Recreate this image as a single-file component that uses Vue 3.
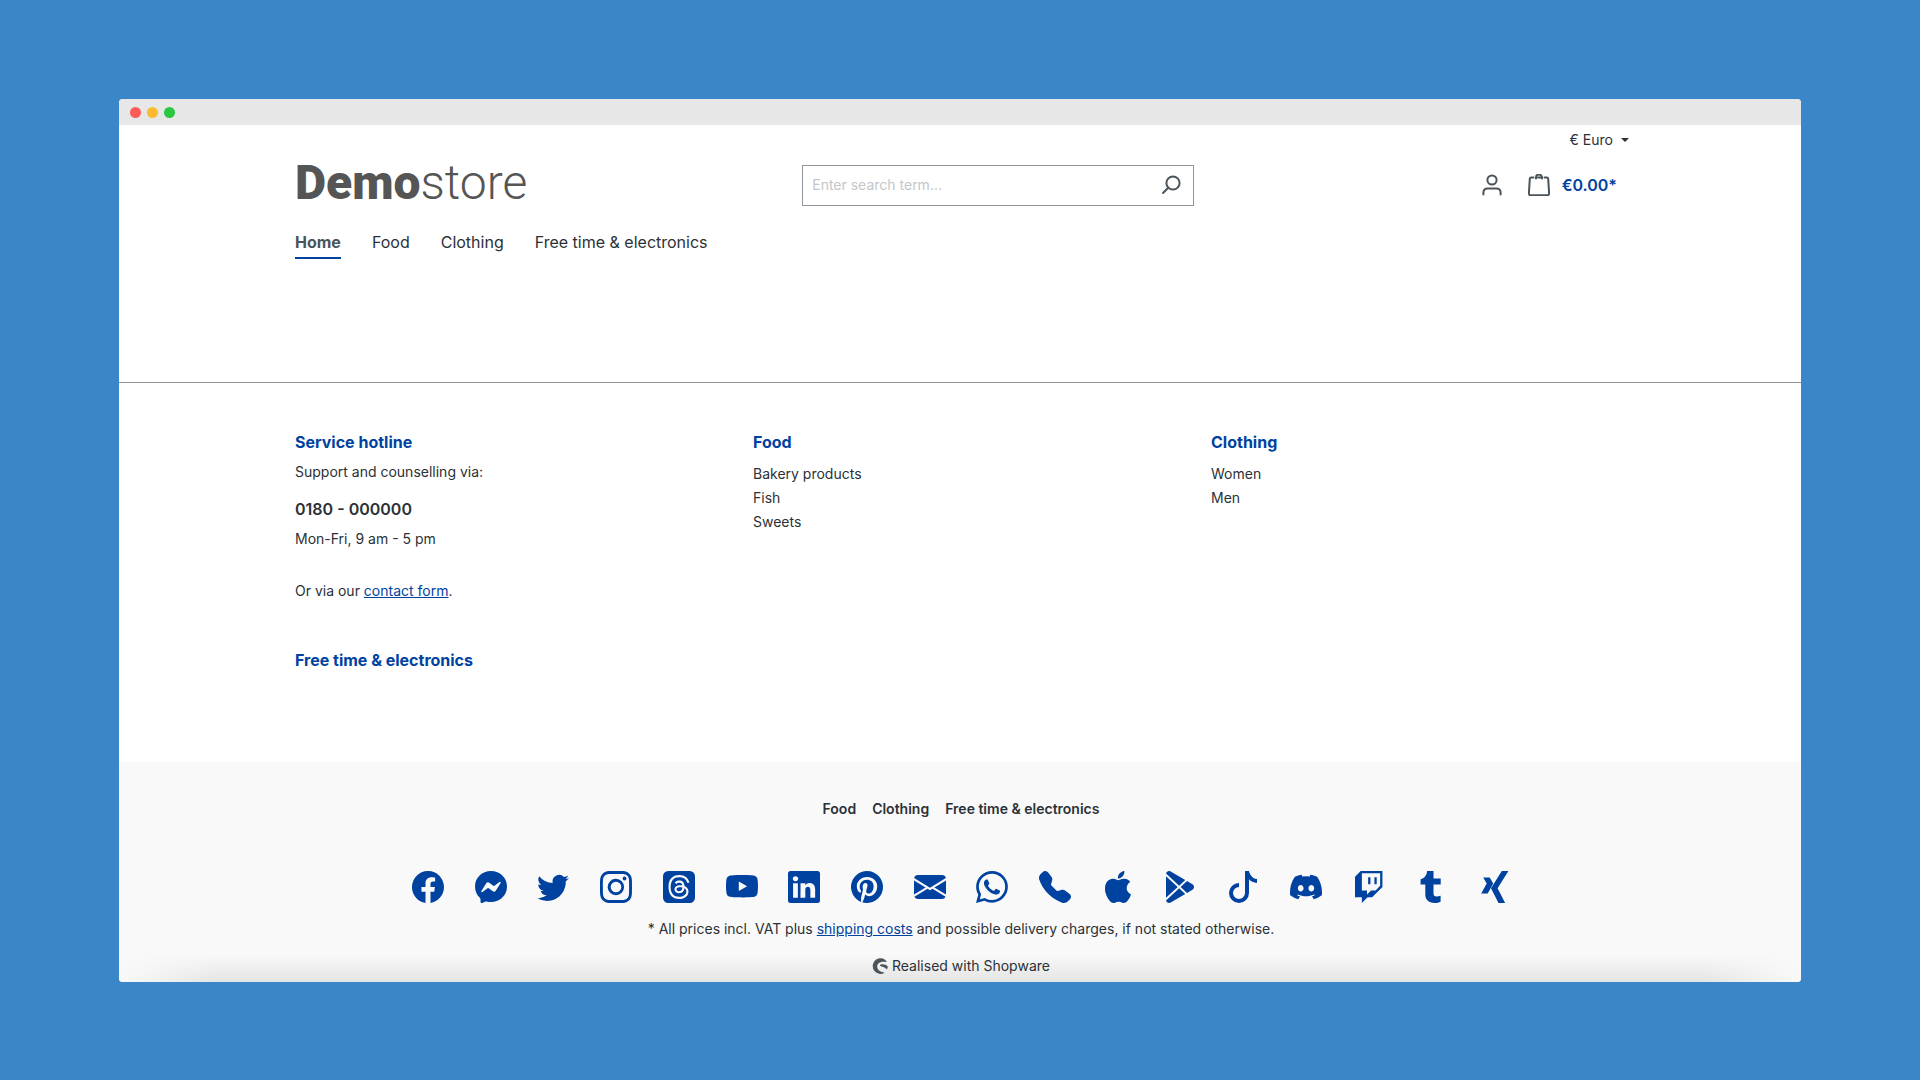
<script setup>
const mainNav = ['Home', 'Food', 'Clothing', 'Free time & electronics']
const footerNav = ['Food', 'Clothing', 'Free time & electronics']

const columns = [
  { title: 'Food', links: ['Bakery products', 'Fish', 'Sweets'] },
  { title: 'Clothing', links: ['Women', 'Men'] },
  { title: 'Free time & electronics', links: [] },
]

const socials = [
  { name: 'Facebook', paths: ['M16 8.049c0-4.446-3.582-8.05-8-8.05C3.58 0-.002 3.603-.002 8.05c0 4.017 2.926 7.347 6.75 7.951v-5.625h-2.03V8.05H6.75V6.275c0-2.017 1.195-3.131 3.022-3.131.876 0 1.791.157 1.791.157v1.98h-1.009c-.993 0-1.303.621-1.303 1.258v1.51h2.218l-.354 2.326H9.25V16c3.824-.604 6.75-3.934 6.75-7.951'] },
  { name: 'Messenger', paths: ['M0 7.76C0 3.301 3.493 0 8 0s8 3.301 8 7.76-3.493 7.76-8 7.76c-.81 0-1.586-.107-2.316-.307a.64.64 0 0 0-.427.03l-1.588.702a.64.64 0 0 1-.898-.566l-.044-1.423a.64.64 0 0 0-.215-.456C.956 12.108 0 10.092 0 7.76m5.546-1.459-2.35 3.728c-.225.358.214.761.551.506l2.525-1.916a.48.48 0 0 1 .578-.002l1.869 1.402a1.2 1.2 0 0 0 1.735-.32l2.35-3.728c.226-.358-.214-.761-.551-.506L9.728 7.381a.48.48 0 0 1-.578.002L7.281 5.98a1.2 1.2 0 0 0-1.735.32z'] },
  { name: 'Twitter', paths: ['M5.026 15c6.038 0 9.341-5.003 9.341-9.334q.002-.211-.006-.422A6.7 6.7 0 0 0 16 3.542a6.7 6.7 0 0 1-1.889.518 3.3 3.3 0 0 0 1.447-1.817 6.5 6.5 0 0 1-2.087.793A3.286 3.286 0 0 0 7.875 6.03a9.32 9.32 0 0 1-6.767-3.429 3.29 3.29 0 0 0 1.018 4.382A3.3 3.3 0 0 1 .64 6.575v.045a3.29 3.29 0 0 0 2.632 3.218 3.2 3.2 0 0 1-.865.115 3 3 0 0 1-.614-.057 3.28 3.28 0 0 0 3.067 2.277A6.6 6.6 0 0 1 .78 13.58a6 6 0 0 1-.78-.045A9.34 9.34 0 0 0 5.026 15'] },
  { name: 'Instagram', paths: ['M8 0C5.829 0 5.556.01 4.703.048 3.85.088 3.269.222 2.76.42a3.9 3.9 0 0 0-1.417.923A3.9 3.9 0 0 0 .42 2.76C.222 3.268.087 3.85.048 4.7.01 5.555 0 5.827 0 8.001c0 2.172.01 2.444.048 3.297.04.852.174 1.433.372 1.942.205.526.478.972.923 1.417.444.445.89.719 1.416.923.51.198 1.09.333 1.942.372C5.555 15.99 5.827 16 8 16s2.444-.01 3.298-.048c.851-.04 1.434-.174 1.943-.372a3.9 3.9 0 0 0 1.416-.923c.445-.445.718-.891.923-1.417.197-.509.332-1.09.372-1.942C15.99 10.445 16 10.173 16 8s-.01-2.445-.048-3.299c-.04-.851-.175-1.433-.372-1.941a3.9 3.9 0 0 0-.923-1.417A3.9 3.9 0 0 0 13.24.42c-.51-.198-1.092-.333-1.943-.372C10.443.01 10.172 0 7.998 0zm-.717 1.442h.718c2.136 0 2.389.007 3.232.046.78.035 1.204.166 1.486.275.373.145.64.319.92.599s.453.546.598.92c.11.281.24.705.275 1.485.039.843.047 1.096.047 3.231s-.008 2.389-.047 3.232c-.035.78-.166 1.203-.275 1.485a2.5 2.5 0 0 1-.599.919c-.28.28-.546.453-.92.598-.28.11-.704.24-1.485.276-.843.038-1.096.047-3.232.047s-2.39-.009-3.233-.047c-.78-.036-1.203-.166-1.485-.276a2.5 2.5 0 0 1-.92-.598 2.5 2.5 0 0 1-.6-.92c-.109-.281-.24-.705-.275-1.485-.038-.843-.046-1.096-.046-3.233s.008-2.388.046-3.231c.036-.78.166-1.204.276-1.486.145-.373.319-.64.599-.92s.546-.453.92-.598c.282-.11.705-.24 1.485-.276.738-.034 1.024-.044 2.515-.045zm4.988 1.328a.96.96 0 1 0 0 1.92.96.96 0 0 0 0-1.92m-4.27 1.122a4.109 4.109 0 1 0 0 8.217 4.109 4.109 0 0 0 0-8.217m0 1.441a2.667 2.667 0 1 1 0 5.334 2.667 2.667 0 0 1 0-5.334'] },
  { name: 'Threads', paths: ['M6.81 9.204c0-.41.197-1.062 1.727-1.062.469 0 .758.034 1.146.121-.124 1.606-.91 1.818-1.674 1.818-.418 0-1.2-.218-1.2-.877Z', 'M2.59 16h10.82A2.59 2.59 0 0 0 16 13.41V2.59A2.59 2.59 0 0 0 13.41 0H2.59A2.59 2.59 0 0 0 0 2.59v10.82A2.59 2.59 0 0 0 2.59 16M5.866 5.91c.567-.81 1.315-1.126 2.35-1.126.73 0 1.351.246 1.795.711.443.466.696 1.132.754 1.983q.368.154.678.363c.832.559 1.29 1.395 1.29 2.353 0 2.037-1.67 3.806-4.692 3.806-2.595 0-5.291-1.51-5.291-6.004C2.75 3.526 5.361 2 8.033 2c1.234 0 4.129.182 5.217 3.777l-1.02.264c-.842-2.56-2.607-2.968-4.224-2.968-2.675 0-4.187 1.628-4.187 5.093 0 3.107 1.69 4.757 4.222 4.757 2.083 0 3.636-1.082 3.636-2.667 0-1.079-.906-1.595-.953-1.595-.177.925-.651 2.482-2.733 2.482-1.213 0-2.26-.838-2.26-1.936 0-1.568 1.488-2.136 2.663-2.136.44 0 .97.03 1.247.086 0-.478-.404-1.296-1.426-1.296-.911 0-1.16.288-1.45.624l-.024.027c-.202-.135-.875-.601-.875-.601Z'] },
  { name: 'YouTube', paths: ['M8.051 1.999h.089c.822.003 4.987.033 6.11.335a2.01 2.01 0 0 1 1.415 1.42c.101.38.172.883.22 1.402l.01.104.022.26.008.104c.065.914.073 1.77.074 1.957v.075c-.001.194-.01 1.108-.082 2.06l-.008.105-.009.104c-.05.572-.124 1.14-.235 1.558a2.01 2.01 0 0 1-1.415 1.42c-1.16.312-5.569.334-6.18.335h-.142c-.309 0-1.587-.006-2.927-.052l-.17-.006-.087-.004-.171-.007-.171-.007c-1.11-.049-2.167-.128-2.654-.26a2.01 2.01 0 0 1-1.415-1.419c-.111-.417-.185-.986-.235-1.558L.09 9.82l-.008-.104A31 31 0 0 1 0 7.68v-.123c.002-.215.01-.958.064-1.778l.007-.103.003-.052.008-.104.022-.26.01-.104c.048-.519.119-1.023.22-1.402a2.01 2.01 0 0 1 1.415-1.42c.487-.13 1.544-.21 2.654-.26l.17-.007.172-.006.086-.003.171-.007A100 100 0 0 1 7.858 2zM6.4 5.209v4.818l4.157-2.408z'] },
  { name: 'LinkedIn', paths: ['M0 1.146C0 .513.526 0 1.175 0h13.65C15.474 0 16 .513 16 1.146v13.708c0 .633-.526 1.146-1.175 1.146H1.175C.526 16 0 15.487 0 14.854zm4.943 12.248V6.169H2.542v7.225zm-1.2-8.212c.837 0 1.358-.554 1.358-1.248-.015-.709-.52-1.248-1.342-1.248S2.4 3.226 2.4 3.934c0 .694.521 1.248 1.327 1.248zm4.908 8.212V9.359c0-.216.016-.432.08-.586.173-.431.568-.878 1.232-.878.869 0 1.216.662 1.216 1.634v3.865h2.401V9.25c0-2.22-1.184-3.252-2.764-3.252-1.274 0-1.845.7-2.165 1.193v.025h-.016l.016-.025V6.169h-2.4c.03.678 0 7.225 0 7.225z'] },
  { name: 'Pinterest', paths: ['M8 0a8 8 0 0 0-2.915 15.452c-.07-.633-.134-1.606.027-2.297.146-.625.938-3.977.938-3.977s-.239-.479-.239-1.187c0-1.113.645-1.943 1.448-1.943.682 0 1.012.512 1.012 1.127 0 .686-.437 1.712-.663 2.663-.188.796.4 1.446 1.185 1.446 1.422 0 2.515-1.5 2.515-3.664 0-1.915-1.377-3.254-3.342-3.254-2.276 0-3.612 1.707-3.612 3.471 0 .688.265 1.425.595 1.826a.24.24 0 0 1 .056.23c-.061.252-.196.796-.222.907-.035.146-.116.177-.268.107-1-.465-1.624-1.926-1.624-3.1 0-2.523 1.834-4.84 5.286-4.84 2.775 0 4.932 1.977 4.932 4.62 0 2.757-1.739 4.976-4.151 4.976-.811 0-1.573-.421-1.834-.919l-.498 1.902c-.181.695-.669 1.566-.995 2.097A8 8 0 1 0 8 0'] },
  { name: 'Email', paths: ['M.05 3.555A2 2 0 0 1 2 2h12a2 2 0 0 1 1.95 1.555L8 8.414zM0 4.697v7.104l5.803-3.558zM6.761 8.83l-6.57 4.027A2 2 0 0 0 2 14h12a2 2 0 0 0 1.808-1.144l-6.57-4.027L8 9.586zm3.436-.586L16 11.801V4.697z'] },
  { name: 'WhatsApp', paths: ['M13.601 2.326A7.85 7.85 0 0 0 7.994 0C3.627 0 .068 3.558.064 7.926c0 1.399.366 2.76 1.057 3.965L0 16l4.204-1.102a7.9 7.9 0 0 0 3.79.965h.004c4.368 0 7.926-3.558 7.93-7.93A7.9 7.9 0 0 0 13.6 2.326zM7.994 14.521a6.6 6.6 0 0 1-3.356-.92l-.24-.144-2.494.654.666-2.433-.156-.251a6.56 6.56 0 0 1-1.007-3.505c0-3.626 2.957-6.584 6.591-6.584a6.56 6.56 0 0 1 4.66 1.931 6.56 6.56 0 0 1 1.928 4.66c-.004 3.639-2.961 6.592-6.592 6.592m3.615-4.934c-.197-.099-1.17-.578-1.353-.646-.182-.065-.315-.099-.445.099-.133.197-.513.646-.627.775-.114.133-.232.148-.43.05-.197-.1-.836-.308-1.592-.985-.59-.525-.985-1.175-1.103-1.372-.114-.198-.011-.304.088-.403.087-.088.197-.232.296-.346.1-.114.133-.198.198-.33.065-.134.034-.248-.015-.347-.05-.099-.445-1.076-.612-1.47-.16-.389-.323-.335-.445-.34-.114-.007-.247-.007-.38-.007a.73.73 0 0 0-.529.247c-.182.198-.691.677-.691 1.654s.71 1.916.81 2.049c.098.133 1.394 2.132 3.383 2.992.47.205.84.326 1.129.418.475.152.904.129 1.246.08.38-.058 1.171-.48 1.338-.943.164-.464.164-.86.114-.943-.049-.084-.182-.133-.38-.232'] },
  { name: 'Phone', paths: ['M1.885.511a1.745 1.745 0 0 1 2.61.163L6.29 2.98c.329.423.445.974.315 1.494l-.547 2.19a.68.68 0 0 0 .178.643l2.457 2.457a.68.68 0 0 0 .644.178l2.189-.547a1.75 1.75 0 0 1 1.494.315l2.306 1.794c.829.645.905 1.87.163 2.611l-1.034 1.034c-.74.74-1.846 1.065-2.877.702a18.6 18.6 0 0 1-7.01-4.42 18.6 18.6 0 0 1-4.42-7.009c-.362-1.03-.037-2.137.703-2.877z'] },
  { name: 'Apple', paths: ['M11.182.008C11.148-.03 9.923.023 8.857 1.18c-1.066 1.156-.902 2.482-.878 2.516s1.52.087 2.475-1.258.762-2.391.728-2.43m3.314 11.733c-.048-.096-2.325-1.234-2.113-3.422s1.675-2.789 1.698-2.854-.597-.79-1.254-1.157a3.7 3.7 0 0 0-1.563-.434c-.108-.003-.483-.095-1.254.116-.508.139-1.653.589-1.968.607-.316.018-1.256-.522-2.267-.665-.647-.125-1.333.131-1.824.328-.49.196-1.422.754-2.074 2.237-.652 1.482-.311 3.83-.067 4.56s.625 1.924 1.273 2.796c.576.984 1.34 1.667 1.659 1.899s1.219.386 1.843.067c.502-.308 1.408-.485 1.766-.472.357.013 1.061.154 1.782.539.571.197 1.111.115 1.652-.105.541-.221 1.324-1.059 2.238-2.758q.52-1.185.473-1.282'] },
  { name: 'Google Play', paths: ['M14.222 9.374c1.037-.61 1.037-2.137 0-2.748L11.528 5.04 8.32 8l3.207 2.96zm-3.595 2.116L7.583 8.68 1.03 14.73c.201 1.029 1.36 1.61 2.303 1.055zM1 13.396V2.603L6.846 8zM1.03 1.27l6.553 6.05 3.044-2.81L3.333.215C2.39-.341 1.231.24 1.03 1.27'] },
  { name: 'TikTok', paths: ['M9 0h1.98c.144.715.54 1.617 1.235 2.512C12.895 3.389 13.797 4 15 4v2c-1.753 0-3.07-.814-4-1.829V11a5 5 0 1 1-5-5v2a3 3 0 1 0 3 3z'] },
  { name: 'Discord', paths: ['M13.545 2.907a13.2 13.2 0 0 0-3.257-1.011.05.05 0 0 0-.052.025c-.141.25-.297.577-.406.833a12.2 12.2 0 0 0-3.658 0 8 8 0 0 0-.412-.833.05.05 0 0 0-.052-.025c-1.125.194-2.22.534-3.257 1.011a.04.04 0 0 0-.021.018C.356 6.024-.213 9.047.066 12.032q.003.022.021.037a13.3 13.3 0 0 0 3.995 2.02.05.05 0 0 0 .056-.019q.463-.63.818-1.329a.05.05 0 0 0-.01-.059l-.018-.011a9 9 0 0 1-1.248-.595.05.05 0 0 1-.02-.066l.015-.019q.127-.095.248-.195a.05.05 0 0 1 .051-.007c2.619 1.196 5.454 1.196 8.041 0a.05.05 0 0 1 .053.007q.121.1.248.195a.05.05 0 0 1-.004.085 8 8 0 0 1-1.249.594.05.05 0 0 0-.03.03.05.05 0 0 0 .003.041c.24.465.515.909.817 1.329a.05.05 0 0 0 .056.019 13.2 13.2 0 0 0 4.001-2.02.05.05 0 0 0 .021-.037c.334-3.451-.559-6.449-2.366-9.106a.03.03 0 0 0-.02-.019m-8.198 7.307c-.789 0-1.438-.724-1.438-1.612s.637-1.613 1.438-1.613c.807 0 1.45.73 1.438 1.613 0 .888-.637 1.612-1.438 1.612m5.316 0c-.788 0-1.438-.724-1.438-1.612s.637-1.613 1.438-1.613c.807 0 1.451.73 1.438 1.613 0 .888-.631 1.612-1.438 1.612'] },
  { name: 'Twitch', paths: ['M3.857 0 1 2.857v10.286h3.429V16l2.857-2.857H9.57L14.714 8V0zm9.714 7.429-2.285 2.285H9l-2 2v-2H4.429V1.143h9.142z', 'M11.857 3.143h-1.143V6.57h1.143zm-3.143 0H7.571V6.57h1.143z'] },
  { name: 'Tumblr', paths: ['M12.8 15.35c-.7.4-1.9.65-3.05.65-3.04 0-4.6-1.75-4.6-4.2V6.7H2.8V4.1C4.95 3.5 5.85 2.1 6.05 0h3.2v3.7h3.6v3H9.25v4.47c0 1.12.48 1.6 1.5 1.6.68 0 1.400-.18 2.05-.42z'] },
  { name: 'Xing', paths: ['M15.21 0h-3.3L6.5 8.62 10.25 16h3.3L9.8 8.62zM5.85 3.3H2.6l1.75 2.9L1.6 11.2h3.25l2.75-5z'] },
]
</script>

<template>
  <div class="desktop">
    <div class="window">
      <div class="titlebar">
        <span class="dot red"></span>
        <span class="dot yellow"></span>
        <span class="dot green"></span>
      </div>

      <header class="container">
        <div class="topbar">
          <button type="button" class="currency">€ Euro <span class="caret"></span></button>
        </div>
        <div class="header-row">
          <a href="#" class="logo"><b>Demo</b><span>store</span></a>
          <form class="search" role="search" @submit.prevent>
            <input type="search" aria-label="Search" placeholder="Enter search term..." />
            <button type="submit" aria-label="Search">
              <svg viewBox="0 0 22 22" width="22" height="22"><circle cx="13" cy="9" r="6.6" /><path d="M8.2 13.8 3 19" /></svg>
            </button>
          </form>
          <div class="actions">
            <button type="button" aria-label="Your account">
              <svg viewBox="0 0 22 22" width="22" height="22"><circle cx="11" cy="6" r="4.6" /><path d="M2.4 20.4v-2a4 4 0 0 1 4-4h9.2a4 4 0 0 1 4 4v2" /></svg>
            </button>
            <a href="#" class="cart">
              <svg viewBox="0 0 22 22" width="22" height="22"><path d="M5.5 3.5H3.2a1.4 1.4 0 0 0-1.4 1.3L.9 19.5a1.6 1.6 0 0 0 1.6 1.7h17a1.6 1.6 0 0 0 1.6-1.7l-.9-14.7a1.4 1.4 0 0 0-1.4-1.3H16.5M12.5 3.5H10M8 4.5V3.5a3 3 0 0 1 6 0v1" /></svg>
              <span>€0.00*</span>
            </a>
          </div>
        </div>
        <nav class="main-nav">
          <a v-for="(item, i) in mainNav" :key="item" href="#" :class="{ active: i === 0 }">{{ item }}</a>
        </nav>
      </header>

      <footer>
        <div class="container columns">
          <section class="hotline">
            <h2>Service hotline</h2>
            <p>Support and counselling via:</p>
            <p><a href="#" class="phone">0180 - 000000</a></p>
            <p>Mon-Fri, 9 am - 5 pm</p>
            <p class="contact">Or via our <a href="#" class="link">contact form</a>.</p>
          </section>
          <section v-for="col in columns" :key="col.title">
            <h2>{{ col.title }}</h2>
            <ul v-if="col.links.length">
              <li v-for="l in col.links" :key="l"><a href="#">{{ l }}</a></li>
            </ul>
          </section>
        </div>

        <div class="bottom">
          <nav class="footer-nav">
            <a v-for="item in footerNav" :key="item" href="#">{{ item }}</a>
          </nav>
          <div class="socials">
            <a v-for="s in socials" :key="s.name" href="#" :aria-label="s.name">
              <svg viewBox="0 0 16 16" width="32" height="32"><path v-for="d in s.paths" :key="d" :d="d" /></svg>
            </a>
          </div>
          <p>* All prices incl. VAT plus <a href="#" class="link">shipping costs</a> and possible delivery charges, if not stated otherwise.</p>
          <p class="realised">
            <svg viewBox="0 0 16 16" width="16" height="16"><path d="M13 1.7A7.8 7.8 0 1 0 12.6 14.7C9 14.2 5.2 12.5 5.2 8.6 5.2 4.6 9.6 3.2 14.3 4.1c.4 0 .4-.4.2-.7A6 6 0 0 0 13 1.7z" /><path d="M15.8 8.5C14 6.2 10.5 5.7 8.3 6.7c-.6.3-.4.9.1 1.2 2.4 1.1 5 1.3 6.4 3.6.7-.8 1-1.9 1-3z" /></svg>
            Realised with Shopware
          </p>
        </div>
      </footer>
    </div>
  </div>
</template>

<style>
body {
  margin: 0;
}
</style>

<style scoped>
* {
  box-sizing: border-box;
}
.desktop {
  min-height: 100vh;
  padding: 99px 119px 98px;
  background: #3b86c9;
  color: #2b3136;
  font: 14px/20px Inter, 'Liberation Sans', sans-serif;
}
.window {
  background: #fff;
  border-radius: 4px;
  overflow: hidden;
}
.titlebar {
  display: flex;
  align-items: center;
  gap: 6px;
  height: 26px;
  padding: 1px 11px 0;
  background: #e7e7e7;
}
.dot {
  width: 11px;
  height: 11px;
  border-radius: 50%;
}
.red { background: #fc5b57; }
.yellow { background: #fcbb2f; }
.green { background: #29c840; }

.container {
  max-width: 1370px;
  margin: 0 auto;
  padding: 0 16px 0 20px;
}
h2, p, ul {
  margin: 0;
  padding: 0;
}
ul {
  list-style: none;
}
a {
  color: inherit;
  text-decoration: none;
}
button {
  padding: 0;
  border: 0;
  background: none;
  color: inherit;
  font: inherit;
}
svg {
  display: block;
  fill: currentColor;
}
.topbar {
  display: flex;
  justify-content: flex-end;
  padding: 5px 0 7px;
}
.currency {
  display: flex;
  align-items: center;
  gap: 8px;
  line-height: 20px;
}
.caret {
  border: 4px solid transparent;
  border-top-color: currentColor;
  border-bottom: 0;
}
.header-row {
  display: grid;
  grid-template-columns: 7fr 392px 6fr;
  align-items: center;
  height: 56px;
}
.logo {
  padding-bottom: 4px;
  color: #555;
  font: 48px/48px Roboto, sans-serif;
  font-weight: 300;
}
.logo b {
  font-weight: 900;
}
.search {
  display: flex;
  height: 41px;
  border: 1px solid #8f959b;
}
.search input {
  flex: 1;
  min-width: 0;
  padding: 0 9px;
  border: 0;
  outline: 0;
  background: none;
  font: inherit;
}
.search input::placeholder {
  color: #c3c6c9;
}
.search button {
  width: 44px;
  display: grid;
  place-items: center;
}
.search svg, .actions svg {
  fill: none;
  stroke: #4a545b;
  stroke-width: 2;
  stroke-linecap: round;
}
.actions {
  display: flex;
  justify-content: flex-end;
  align-items: center;
  gap: 25px;
  padding-right: 12px;
}
.cart {
  display: flex;
  align-items: center;
  gap: 12px;
  color: #0042a0;
  font-size: 16px;
  font-weight: 600;
}
.main-nav {
  display: flex;
  gap: 31px;
  padding: 17px 0 123px;
  font-size: 16px;
  line-height: 24px;
}
.main-nav a {
  padding-bottom: 3px;
  border-bottom: 2px solid transparent;
}
.main-nav .active {
  border-color: #0042a0;
  color: #4a545b;
  font-weight: 700;
}
footer {
  border-top: 1px solid #8f959b;
}
.columns {
  display: grid;
  grid-template-columns: repeat(3, 1fr);
  column-gap: 40px;
  padding-top: 47px;
  padding-bottom: 82px;
}
h2 {
  margin-bottom: 8px;
  color: #0042a0;
  font-size: 16px;
  line-height: 24px;
  font-weight: 700;
}
li {
  padding: 2px 0;
}
li a {
  display: block;
}
.hotline {
  padding-bottom: 47px;
}
.hotline .phone {
  display: block;
  padding: 15px 0 8px;
  font-size: 16px;
  line-height: 24px;
  font-weight: 600;
}
.contact {
  padding-top: 32px;
}
.link {
  color: #0042a0;
  text-decoration: underline;
}
.bottom {
  display: flex;
  flex-direction: column;
  align-items: center;
  padding: 37px 18px 6px 20px;
  background: linear-gradient(to right, #f9f9f9, transparent 100px calc(100% - 100px), #f9f9f9), linear-gradient(to top, #e4e4e4, #f9f9f9 28px);
}
.footer-nav {
  display: flex;
  gap: 16px;
  font-weight: 600;
}
.socials {
  display: flex;
  justify-content: space-between;
  width: 100%;
  max-width: 1098px;
  padding: 52px 0 16px;
  color: #0042a0;
}
.realised {
  display: flex;
  align-items: center;
  gap: 4px;
  margin-top: 17px;
}
.realised svg {
  color: #4a545b;
}
</style>
